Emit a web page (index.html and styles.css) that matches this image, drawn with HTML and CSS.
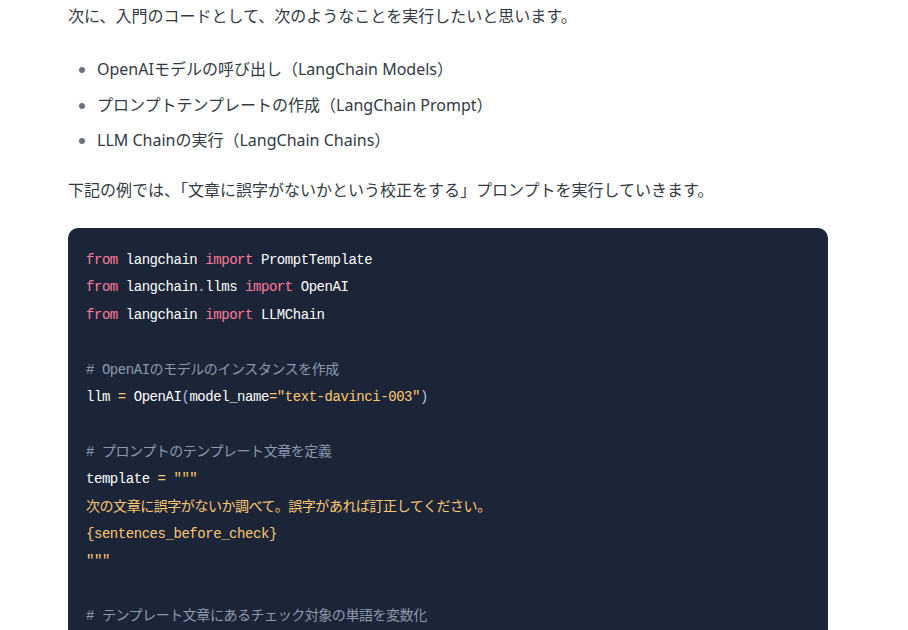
FILE: index.html
```html
<!DOCTYPE html>
<html lang="ja">
<head>
<meta charset="utf-8">
<link rel="stylesheet" href="styles.css">
</head>
<body>
<main class="article">
  <p class="para first">次に、入門のコードとして、次のようなことを実行したいと思います。</p>
  <ul class="list">
    <li>OpenAIモデルの呼び出し（LangChain Models）</li>
    <li>プロンプトテンプレートの作成（LangChain Prompt）</li>
    <li>LLM Chainの実行（LangChain Chains）</li>
  </ul>
  <p class="para">下記の例では、「文章に誤字がないかという校正をする」プロンプトを実行していきます。</p>
  <pre class="code"><code><span class="kw">from</span> langchain <span class="kw">import</span> PromptTemplate
<span class="kw">from</span> langchain<span class="pn">.</span>llms <span class="kw">import</span> OpenAI
<span class="kw">from</span> langchain <span class="kw">import</span> LLMChain

<span class="cm"># OpenAIのモデルのインスタンスを作成</span>
llm <span class="op">=</span> OpenAI<span class="pn">(</span>model_name<span class="op">=</span><span class="st">"text-davinci-003"</span><span class="pn">)</span>

<span class="cm"># プロンプトのテンプレート文章を定義</span>
template <span class="op">=</span> <span class="st">"""</span>
<span class="st">次の文章に誤字がないか調べて。誤字があれば訂正してください。</span>
<span class="st">{sentences_before_check}</span>
<span class="st">"""</span>

<span class="cm"># テンプレート文章にあるチェック対象の単語を変数化</span></code></pre>
</main>
</body>
</html>
```
FILE: styles.css
```css
html, body {
  margin: 0;
  padding: 0;
  background: #ffffff;
}
body {
  font-family: "Noto Sans", "Noto Sans CJK JP", sans-serif;
  color: #333a44;
  font-size: 16px;
}
.article {
  width: 760px;
  margin-left: 68px;
}
.para {
  margin: 0;
  line-height: 28px;
}
.first {
  margin-top: 2px;
}
.list {
  margin: 25px 0 22px 0;
  padding-left: 29px;
}
.list li {
  line-height: 28px;
  margin-bottom: 7.5px;
}
.list li::marker {
  color: #6b7280;
}
.code {
  margin: 24px 0 0 0;
  background: #1c2538;
  border-radius: 10px;
  padding: 19px 18px 20px 18px;
  color: #ffffff;
  font-family: "Liberation Mono", "Noto Sans CJK JP", monospace;
  font-size: 14px;
  letter-spacing: -0.45px;
  line-height: 27.4px;
  white-space: pre;
  overflow: hidden;
}
.code code {
  font-family: inherit;
}
.kw { color: #ff7b9b; }
.st { color: #fdc971; }
.op { color: #fdc971; }
.cm { color: #8d99ad; }
.pn { color: #a9c3e0; }
```
